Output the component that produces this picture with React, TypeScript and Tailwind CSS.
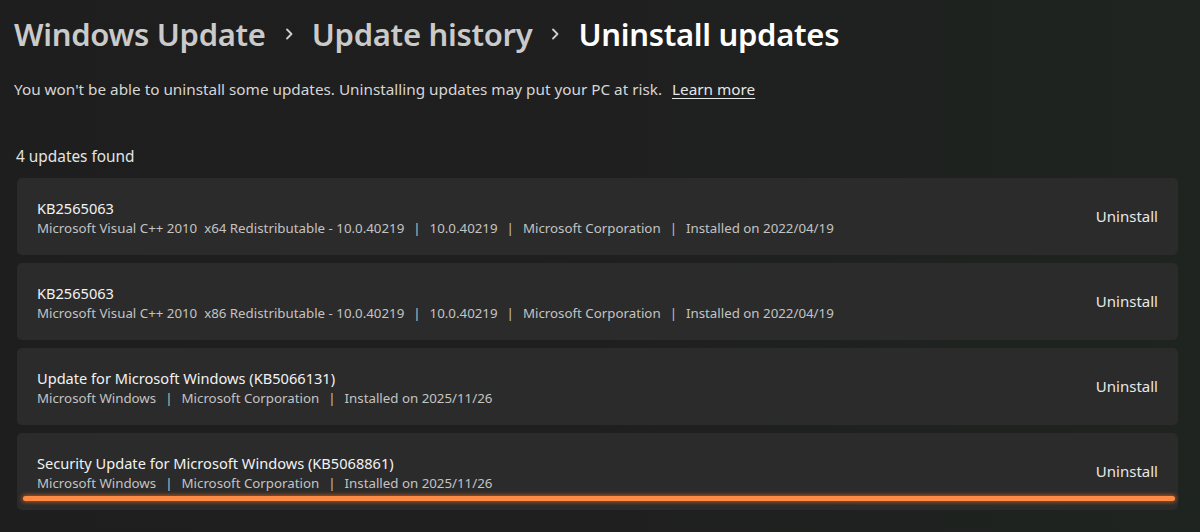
import React from "react";

const updates = [
  {
    title: "KB2565063",
    meta: ["Microsoft Visual C++ 2010  x64 Redistributable - 10.0.40219", "10.0.40219", "Microsoft Corporation", "Installed on 2022/04/19"],
  },
  {
    title: "KB2565063",
    meta: ["Microsoft Visual C++ 2010  x86 Redistributable - 10.0.40219", "10.0.40219", "Microsoft Corporation", "Installed on 2022/04/19"],
  },
  {
    title: "Update for Microsoft Windows (KB5066131)",
    meta: ["Microsoft Windows", "Microsoft Corporation", "Installed on 2025/11/26"],
  },
  {
    title: "Security Update for Microsoft Windows (KB5068861)",
    meta: ["Microsoft Windows", "Microsoft Corporation", "Installed on 2025/11/26"],
    marked: true,
  },
];

function Chevron() {
  return (
    <svg width="12" height="14" viewBox="0 0 12 14" className="mx-[17px]" fill="none">
      <path d="M4 2.5 L8.5 7 L4 11.5" stroke="#cfcfcf" strokeWidth="1.8" strokeLinecap="round" strokeLinejoin="round" />
    </svg>
  );
}

export default function App() {
  return (
    <div
      className="h-[532px] w-[1200px] overflow-hidden bg-gradient-to-r from-[#1e1e1e] via-[#1f1f1f] to-[#1e2420] text-white"
      style={{ fontFamily: '"Noto Sans", "Open Sans", sans-serif' }}
    >
      <div className="px-[14px] pt-[10px]">
        {/* breadcrumb */}
        <div className="flex items-center text-[31px] font-semibold leading-[48px] tracking-[-0.3px]">
          <span className="text-[#cacaca]">Windows Update</span>
          <Chevron />
          <span className="text-[#cacaca]">Update history</span>
          <Chevron />
          <span className="text-white">Uninstall updates</span>
        </div>

        <p className="mt-[19px] text-[15.3px] leading-[24px] text-[#d6d6d6]">
          You won't be able to uninstall some updates. Uninstalling updates may put your PC at risk.
          <a className="ml-[10px] text-[#e6e6e6] underline underline-offset-[3px]">Learn more</a>
        </p>

        <div className="mt-[44px] pl-[2px] text-[15.4px] leading-[24px] text-[#e4e4e4]">4 updates found</div>

        <div className="mt-[9px] ml-[3px] mr-[8px] flex flex-col gap-[8px]">
          {updates.map((u, i) => (
            <div
              key={i}
              className="relative flex h-[77px] items-center justify-between rounded-[5px] bg-[#2b2b2b] pl-[20px] pr-[20px]"
            >
              <div className="pt-[2px]">
                <div className="text-[14.6px] leading-[21px] text-[#f2f2f2]">{u.title}</div>
                <div className="text-[13.3px] leading-[19px] text-[#c3c3c3]">
                  {u.meta.map((m, j) => (
                    <span key={j}>
                      {j > 0 && <span className="mx-[9px]">|</span>}
                      <span className="whitespace-pre">{m}</span>
                    </span>
                  ))}
                </div>
              </div>
              <button className="text-[15px] text-[#e8e8e8]">Uninstall</button>
              {u.marked && (
                <div className="absolute bottom-[9px] left-[6px] right-[3px] h-[5px] rounded-full bg-[#ff8a45] shadow-[0_0_4px_1px_rgba(255,120,40,0.6)]" />
              )}
            </div>
          ))}
        </div>
      </div>
    </div>
  );
}
